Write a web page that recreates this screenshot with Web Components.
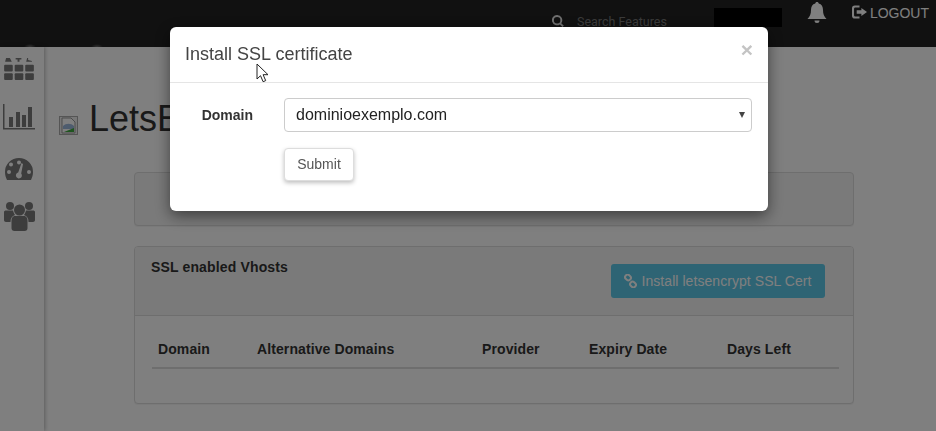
<!DOCTYPE html>
<html>
<head>
<meta charset="utf-8">
<title>LetsEncrypt</title>
<style>
  html, body { margin: 0; height: 431px; overflow: hidden; background: #fff; }
  body { font-family: "Liberation Sans", Arial, sans-serif; color: #333; }
  .layout { display: flex; height: 384px; }
</style>
</head>
<body>
<app-header></app-header>
<div class="layout">
  <app-sidebar></app-sidebar>
  <app-main>
    <ssl-panel slim></ssl-panel>
    <ssl-panel heading="SSL enabled Vhosts">
      <ssl-button slot="action">Install letsencrypt SSL Cert</ssl-button>
      <ssl-table></ssl-table>
    </ssl-panel>
  </app-main>
</div>
<ssl-modal heading="Install SSL certificate"></ssl-modal>

<script>
class AppHeader extends HTMLElement {
  connectedCallback() {
    this.attachShadow({ mode: 'open' });
    this.shadowRoot.innerHTML = `
      <style>
        :host {
          display: flex;
          height: 47px;
          background:
            radial-gradient(ellipse 6px 3px at 30px 47px, #777, transparent),
            radial-gradient(ellipse 6px 3px at 97px 47px, #666, transparent),
            #222;
          color: #fff;
          font-family: "Liberation Sans", Arial, sans-serif;
        }
        .search { display: flex; align-items: center; gap: 13px; margin-left: 552px; height: 42px; color: #777; font: 12.500px Roboto, sans-serif; }
        .search svg { width: 12px; height: 12px; fill: #e0e0e0; }
        .box { width: 68px; height: 19px; margin: 8px 0 0 47px; background: #000; }
        .bell { width: 20px; height: 22px; margin: 2px 0 0 25px; fill: #fff; }
        .logout { display: flex; align-items: flex-start; gap: 3px; margin-left: 25px; padding-top: 5px; font-size: 14px; line-height: 16px; color: #fff; }
        .logout svg { width: 15px; height: 14px; fill: #fff; }
      </style>
      <div class="search">
        <svg viewBox="0 0 14 14"><path d="M6 0a6 6 0 0 1 4.800 9.500l3 3-1.600 1.500-3-3A6 6 0 1 1 6 0zm0 2.200a3.800 3.800 0 1 0 0 7.600 3.800 3.800 0 0 0 0-7.600z"/></svg>
        <span>Search Features</span>
      </div>
      <div class="box"></div>
      <svg class="bell" viewBox="0 0 20 22"><path d="M10 0c1 0 1.700.7 1.700 1.600 3 .7 4.300 3.300 4.300 6.400 0 4 1 6.500 3.500 9H.5C3 14.500 4 12 4 8c0-3.100 1.300-5.700 4.300-6.400C8.300.7 9 0 10 0zM7.500 18.500h5a2.500 2.500 0 0 1-5 0z"/></svg>
      <div class="logout">
        <svg viewBox="0 0 16 14"><path d="M3 0h5v2.200H3.500a1.300 1.300 0 0 0-1.300 1.300v7a1.300 1.300 0 0 0 1.300 1.300H8V14H3a3 3 0 0 1-3-3V3a3 3 0 0 1 3-3zm7 2.800L16 7l-6 4.200V8.800H5V5.200h5z"/></svg>
        <span>LOGOUT</span>
      </div>
    `;
  }
}

class AppSidebar extends HTMLElement {
  connectedCallback() {
    this.attachShadow({ mode: 'open' });
    this.shadowRoot.innerHTML = `
      <style>
        :host {
          display: flex;
          flex-direction: column;
          align-items: center;
          gap: 17px;
          box-sizing: border-box;
          width: 44px;
          flex: none;
          padding: 11px 6px 0 0;
          background: #fff;
          box-shadow: 1px 0 4px rgba(0, 0, 0, 0.28);
        }
        svg { display: block; fill: #7a7a7a; }
      </style>
      <svg width="30" height="23" viewBox="0 0 31 24">
        <path d="M2 0h4l2 4H1zM12 0h6v1.500h-2V4h-2V1.500h-2zM24 0h1v2l4 1v1h-6z"/>
        <rect x="0" y="7" width="9" height="7" rx="1"/><rect x="11" y="7" width="9" height="7" rx="1"/><rect x="22" y="7" width="9" height="7" rx="1"/>
        <rect x="0" y="16" width="9" height="7" rx="1"/><rect x="11" y="16" width="9" height="7" rx="1"/><rect x="22" y="16" width="9" height="7" rx="1"/>
      </svg>
      <svg width="32" height="26" viewBox="0 0 32 26" style="margin-top:6px">
        <path d="M0 0h1.500v24H32v1.500H0z"/>
        <rect x="6" y="13" width="4" height="10"/><rect x="13" y="8" width="4" height="15"/><rect x="19" y="11" width="4" height="12"/><rect x="25" y="3" width="4" height="20"/>
      </svg>
      <svg width="28" height="22" viewBox="0 0 28 22" style="margin-top:11px">
        <path fill-rule="evenodd" d="M14 0a14 14 0 0 1 14 14c0 3-.8 5.500-2 8H2c-1.200-2.500-2-5-2-8A14 14 0 0 1 14 0zM6 4.500a2 2 0 1 0 0 4 2 2 0 0 0 0-4zM14 2.500a2 2 0 1 0 0 4 2 2 0 0 0 0-4zM4 12a2 2 0 1 0 0 4 2 2 0 0 0 0-4zM24 12a2 2 0 1 0 0 4 2 2 0 0 0 0-4zM16.500 5l-3.300 9.500a3 3 0 1 0 3 1L18 6z"/>
      </svg>
      <svg width="31" height="29" viewBox="0 0 31 29" style="margin-top:5px">
        <circle cx="6" cy="4" r="4"/><circle cx="25" cy="4" r="4"/><circle cx="15.500" cy="8" r="5.500"/>
        <path d="M0 10c0-1 1-1.500 2-1.500h7c.5 2 1.500 3.500 2 4.500-3 1-4.500 3-4.500 7H2c-1.200 0-2-1-2-2zM31 10c0-1-1-1.500-2-1.500h-7c-.5 2-1.500 3.500-2 4.500 3 1 4.500 3 4.500 7H29c1.200 0 2-1 2-2z"/>
        <path d="M11 14h9c2.500 0 3.500 2.500 3.500 5v7c0 2-1 3-3 3h-10c-2 0-3-1-3-3v-7c0-2.500 1-5 3.500-5z"/>
      </svg>
    `;
  }
}

class AppMain extends HTMLElement {
  connectedCallback() {
    this.attachShadow({ mode: 'open' });
    this.shadowRoot.innerHTML = `
      <style>
        :host { display: block; flex: 1; padding-left: 15px; }
        h1 {
          display: flex;
          align-items: flex-end;
          gap: 11px;
          height: 41px;
          margin: 51px 0 0;
          font-size: 36px;
          font-weight: 400;
          line-height: 41px;
          color: #333;
        }
        .broken { width: 19px; height: 19px; margin-bottom: 4px; box-sizing: border-box; border: 1px solid #aaa; background: #eee; }
        .broken svg { display: block; width: 17px; height: 17px; }
        .panels { display: flex; flex-direction: column; gap: 20px; margin: 33px 82px 0 75px; }
      </style>
      <h1>
        <span class="broken">
          <svg viewBox="0 0 17 17">
            <path d="M2 1h9l4 4v11H2z" fill="#fff" stroke="#999"/>
            <path d="M3 9c3-3 8-3 11 0v3H3z" fill="#9db8dc"/>
            <path d="M4 15l10-4v4z" fill="#3fa83f"/>
          </svg>
        </span>
        <span>LetsE</span>
      </h1>
      <div class="panels"><slot></slot></div>
    `;
  }
}

class SslPanel extends HTMLElement {
  connectedCallback() {
    const heading = this.getAttribute('heading');
    this.attachShadow({ mode: 'open' });
    this.shadowRoot.innerHTML = `
      <style>
        :host {
          display: block;
          box-sizing: border-box;
          border: 1px solid #ddd;
          border-radius: 4px;
          background: #fff;
          box-shadow: 0 1px 1px rgba(0, 0, 0, 0.05);
        }
        :host([slim]) { height: 54px; background: #f5f5f5; }
        .heading {
          display: flex;
          justify-content: space-between;
          box-sizing: border-box;
          height: 69px;
          padding: 13px 28px 0 16px;
          border-bottom: 1px solid #ddd;
          background: #f5f5f5;
          font-size: 14px;
          font-weight: 700;
          letter-spacing: .15px;
          line-height: 15px;
          border-radius: 3px 3px 0 0;
        }
        .body { box-sizing: border-box; padding: 18px 14px 0 17px; height: 87px; }
      </style>
      ${heading ? `
        <div class="heading"><span>${heading}</span><slot name="action"></slot></div>
        <div class="body"><slot></slot></div>
      ` : ''}
    `;
  }
}

class SslButton extends HTMLElement {
  connectedCallback() {
    this.attachShadow({ mode: 'open' });
    this.shadowRoot.innerHTML = `
      <style>
        :host {
          display: flex;
          align-items: center;
          justify-content: center;
          gap: 4px;
          box-sizing: border-box;
          width: 214px;
          height: 34px;
          margin-top: 4px;
          border-radius: 3px;
          background: #5cc8e8;
          color: #fff;
          font-size: 14px;
          font-weight: 400;
          letter-spacing: .06px;
        }
        svg { width: 13px; height: 14px; }
      </style>
      <svg viewBox="0 0 13 14" fill="none" stroke="#fff" stroke-width="2">
        <rect x="1" y="1" width="6" height="5" rx="2.500" transform="rotate(40 4 3.500)"/>
        <rect x="6" y="8" width="6" height="5" rx="2.500" transform="rotate(40 9 10.500)"/>
      </svg>
      <slot></slot>
    `;
  }
}

class SslTable extends HTMLElement {
  connectedCallback() {
    const columns = ['Domain', 'Alternative Domains', 'Provider', 'Expiry Date', 'Days Left'];
    this.attachShadow({ mode: 'open' });
    this.shadowRoot.innerHTML = `
      <style>
        :host {
          display: grid;
          grid-template-columns: 99px 225px 107px 138px 1fr;
          box-sizing: border-box;
          height: 35px;
          padding-left: 6px;
          border-bottom: 2px solid #ddd;
          font-size: 14px;
          font-weight: 700;
          letter-spacing: .1px;
          line-height: 31px;
        }
      </style>
      ${columns.map(name => `<span>${name}</span>`).join('')}
    `;
  }
}

class SslModal extends HTMLElement {
  connectedCallback() {
    this.attachShadow({ mode: 'open' });
    this.shadowRoot.innerHTML = `
      <style>
        :host {
          display: block;
          position: fixed;
          inset: 0;
          box-sizing: border-box;
          padding: 27px 0 0 170px;
          background: rgba(0, 0, 0, 0.5);
        }
        .dialog {
          position: relative;
          box-sizing: border-box;
          width: 598px;
          height: 184px;
          border-radius: 6px;
          background: #fff;
          box-shadow: 0 5px 15px rgba(0, 0, 0, 0.5);
        }
        header {
          display: flex;
          justify-content: space-between;
          align-items: center;
          box-sizing: border-box;
          height: 56px;
          padding: 0 15px 1px;
          border-bottom: 1px solid #e5e5e5;
        }
        h4 { margin: 0; font-size: 18px; font-weight: 400; color: #444; }
        .close { margin: -10px 0 0; font-size: 21px; font-weight: 700; line-height: 1; color: #c4c4c4; }
        form { display: grid; grid-template-columns: 83px 468px; column-gap: 31px; row-gap: 16px; margin: 0; padding: 15px 0 0 0; }
        label { justify-self: end; align-self: center; font-size: 14px; font-weight: 700; }
        .select {
          display: flex;
          align-items: center;
          justify-content: space-between;
          box-sizing: border-box;
          height: 34px;
          padding: 0 6px 0 11px;
          border: 1px solid #ccc;
          border-radius: 4px;
          font-size: 16px;
          color: #222;
        }
        .select i { width: 0; height: 0; border: 3.500px solid transparent; border-top: 6px solid #444; border-bottom: 0; }
        button {
          grid-column: 2;
          justify-self: start;
          box-sizing: border-box;
          width: 70px;
          height: 33px;
          padding-bottom: 3px;
          border: 1px solid #ddd;
          border-radius: 4px;
          background: #fff;
          box-shadow: 0 2px 4px rgba(0, 0, 0, 0.25);
          font: 14px "Liberation Sans", Arial, sans-serif;
          color: #555;
        }
        .cursor { position: absolute; left: 86px; top: 36px; width: 14px; height: 20px; }
      </style>
      <div class="dialog">
        <header><h4>${this.getAttribute('heading')}</h4><span class="close">×</span></header>
        <form onsubmit="return false">
          <label>Domain</label>
          <div class="select"><span>dominioexemplo.com</span><i></i></div>
          <button type="button">Submit</button>
        </form>
        <svg class="cursor" viewBox="0 0 14 20"><path d="M1 1v15l3.500-3.300 2.600 6 2.600-1.100-2.600-5.900H12z" fill="#fff" stroke="#222"/></svg>
      </div>
    `;
  }
}

customElements.define('app-header', AppHeader);
customElements.define('app-sidebar', AppSidebar);
customElements.define('app-main', AppMain);
customElements.define('ssl-panel', SslPanel);
customElements.define('ssl-button', SslButton);
customElements.define('ssl-table', SslTable);
customElements.define('ssl-modal', SslModal);
</script>
</body>
</html>
